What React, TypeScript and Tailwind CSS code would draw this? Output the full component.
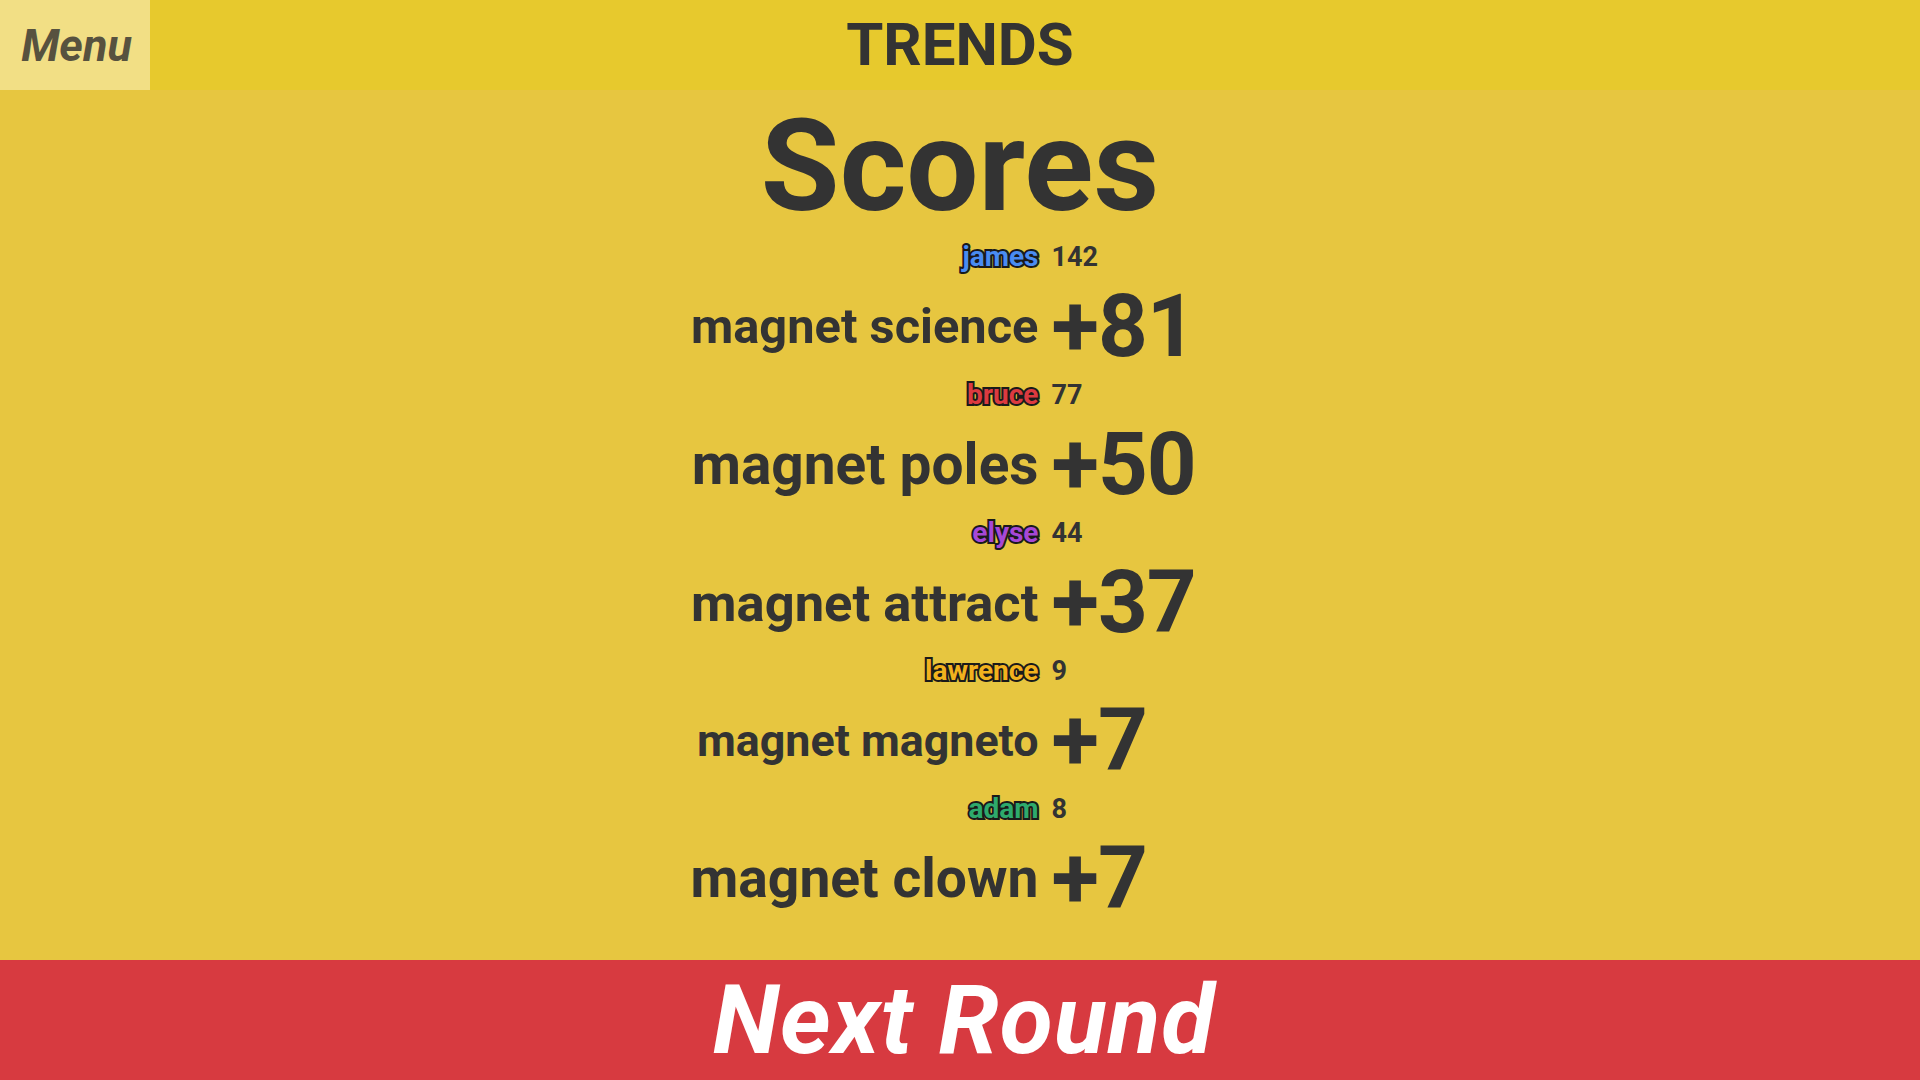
import React from "react";

const rows = [
  { name: "james", color: "text-[#4a8cf2]", total: 142, phrase: "magnet science", size: "text-[48.8px]", pts: 81 },
  { name: "bruce", color: "text-[#dc3a40]", total: 77, phrase: "magnet poles", size: "text-[56.8px]", pts: 50 },
  { name: "elyse", color: "text-[#a748d6]", total: 44, phrase: "magnet attract", size: "text-[52.5px]", pts: 37 },
  { name: "lawrence", color: "text-[#f2b21e]", total: 9, phrase: "magnet magneto", size: "text-[44.8px]", pts: 7 },
  { name: "adam", color: "text-[#2eaa6c]", total: 8, phrase: "magnet clown", size: "text-[55.2px]", pts: 7 },
];

const font = "font-['Roboto','Liberation_Sans',sans-serif]";

export default function App() {
  return (
    <div className={`h-screen w-full flex flex-col bg-[#e7c640] text-[#333333] ${font}`}>
      <header className="h-[90px] relative flex items-center justify-center bg-[#e7c92d]">
        <button className="absolute left-0 top-0 w-[150px] h-full bg-[#f2df85] flex items-center justify-center text-[45px] font-bold italic text-[#57523f] leading-none pl-[3px]">
          Menu
        </button>
        <div className="text-[60px] font-bold leading-none">TRENDS</div>
      </header>
      <main className="flex-1 flex flex-col items-center pt-[12px]">
        <h1 className="text-[128px] leading-none font-bold h-[128px]">Scores</h1>
        <div className="mt-[3px] grid grid-cols-[auto_178px] gap-x-[13px]">
          {rows.map((r) => (
            <React.Fragment key={r.name}>
              <div className="h-[48px] flex items-center justify-end">
                <span
                  className={`text-[28px] font-bold leading-none ${r.color} [-webkit-text-stroke:4px_#1a1a1a] [paint-order:stroke_fill]`}
                >
                  {r.name}
                </span>
              </div>
              <div className="h-[48px] flex items-center text-[27px] font-bold leading-none">{r.total}</div>
              <div
                className={`h-[90px] flex items-center justify-end ${r.size} font-bold leading-none whitespace-nowrap pt-[2px]`}
              >
                {r.phrase}
              </div>
              <div className="h-[90px] flex items-center text-[87px] font-bold leading-none tracking-[-1px]">
                +{r.pts}
              </div>
            </React.Fragment>
          ))}
        </div>
      </main>
      <footer className="h-[120px] bg-[#d73a40] flex items-center justify-center">
        <span className="text-[97px] font-bold italic text-white leading-none tracking-[1px] pl-[8px]">Next Round</span>
      </footer>
    </div>
  );
}
